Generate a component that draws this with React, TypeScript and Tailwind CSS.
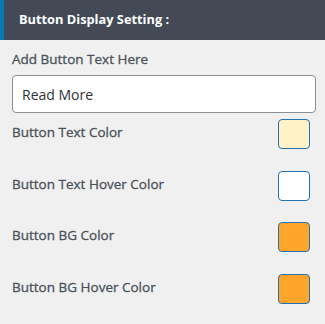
import React from "react";

const rows = [
  { label: "Button Text Color", color: "#fff2c7" },
  { label: "Button Text Hover Color", color: "#ffffff" },
  { label: "Button BG Color", color: "#ffa52b" },
  { label: "Button BG Hover Color", color: "#ffa52b" },
];

export default function App() {
  return (
    <div
      className="w-[325px] h-[324px] bg-[#f0f0f1] overflow-hidden"
      style={{ fontFamily: '"Open Sans", "Noto Sans", sans-serif' }}
    >
      <div className="flex h-[40px] bg-[#434a56]">
        <div className="w-[4px] bg-[#0a74b4]" />
        <div className="flex items-center pl-[15px] text-[12.8px] font-bold text-white">
          Button Display Setting :
        </div>
      </div>
      <div className="px-[12px] pr-[9px]">
        <div className="pt-[9px] text-[13.5px] leading-[20px] text-[#4a5158] [-webkit-text-stroke:0.3px_#4a5158]">Add Button Text Here</div>
        <div className="mt-[6px] h-[38px] flex items-center rounded-[4px] border border-[#8c8f94] bg-white pl-[9px] text-[14px] text-[#2c3338]">
          Read More
        </div>
        <div className="flex flex-col">
          {rows.map((r, i) => (
            <div key={i} className="flex justify-between h-[51.7px] pt-[5px]">
              <div className="text-[13.5px] leading-[20px] pt-[4px] text-[#4a5158] [-webkit-text-stroke:0.3px_#4a5158]">{r.label}</div>
              <div
                className="mt-[1px] w-[32px] h-[30px] rounded-[4px] border border-[#2271b1] mr-[6px]"
                style={{ backgroundColor: r.color }}
              />
            </div>
          ))}
        </div>
      </div>
    </div>
  );
}
